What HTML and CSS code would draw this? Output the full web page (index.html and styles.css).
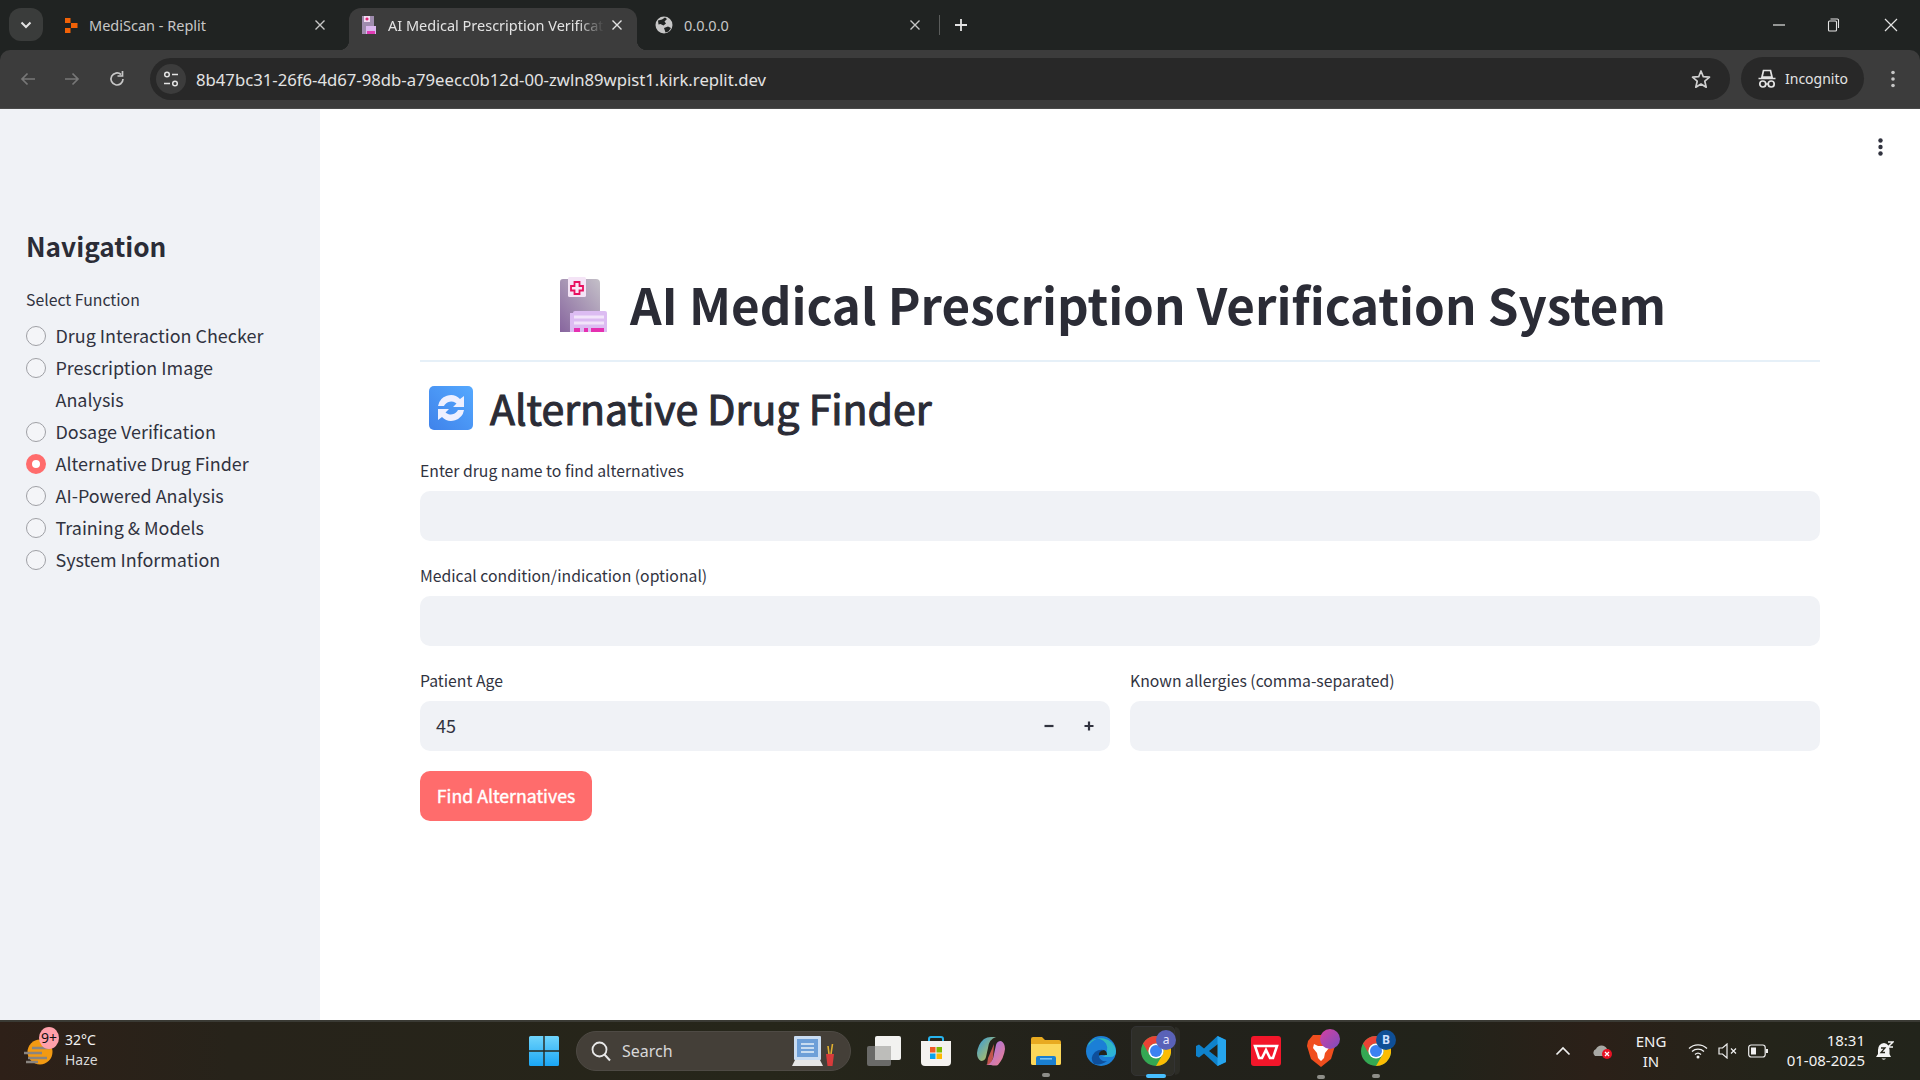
FILE: index.html
```html
<!DOCTYPE html>
<html lang="en">
<head>
<meta charset="utf-8">
<title>AI Medical Prescription Verification System</title>
<link rel="stylesheet" href="styles.css">
</head>
<body>
<svg class="defs" width="0" height="0" aria-hidden="true">
  <defs>
    <symbol id="chrome" viewBox="0 0 30 30">
      <circle cx="15" cy="15" r="15" fill="#34a853"/>
      <path d="M15 0A15 15 0 0 1 28 7.5H15A7.5 7.5 0 0 0 8.5 18.75L2 7.5A15 15 0 0 1 15 0Z" fill="#ea4335"/>
      <path d="M28 7.5A15 15 0 0 1 15 30L21.5 18.75A7.5 7.5 0 0 0 15 7.5Z" fill="#fbbc04"/>
      <circle cx="15" cy="15" r="7.6" fill="#fff"/>
      <circle cx="15" cy="15" r="6" fill="#3b82f0"/>
    </symbol>
    <symbol id="close" viewBox="0 0 12 12">
      <path d="M1.5 1.5L10.5 10.5M10.5 1.5L1.5 10.5" fill="none" stroke="currentColor" stroke-width="1.4"/>
    </symbol>
  </defs>
</svg>

<header class="tabstrip">
  <button class="tab-search" aria-label="Search tabs">
    <svg width="12" height="8" viewBox="0 0 12 8"><path d="M1.5 1.5L6 6L10.5 1.5" fill="none" stroke="#e3e3e3" stroke-width="2"/></svg>
  </button>
  <div class="tab tab-first">
    <svg class="favicon" width="14" height="15" viewBox="0 0 14 15"><path d="M1 0H6.5V5H1ZM7 5H13.5V10H7ZM1 10H6.5V15H1Z" fill="#f26207"/></svg>
    <span class="tab-title">MediScan - Replit</span>
    <svg class="tab-close" width="12" height="12"><use href="#close"/></svg>
  </div>
  <div class="tab tab-active">
    <svg class="favicon" width="16" height="18" viewBox="0 0 16 18"><rect x="1" y="0" width="12" height="18" fill="#9f8cae"/><rect x="3" y="0" width="6" height="6" fill="#f3dcf3"/><path d="M6 1.5V4.500M4.500 3H7.500" stroke="#e0186c" stroke-width="1.300"/><rect x="5" y="10" width="10" height="8" fill="#dcb8f0"/><rect x="6" y="15" width="8" height="3" fill="#e03cb4"/></svg>
    <span class="tab-title tab-title-fade">AI Medical Prescription Verificat</span>
    <svg class="tab-close" width="12" height="12"><use href="#close"/></svg>
  </div>
  <div class="tab tab-third">
    <svg class="favicon" width="18" height="18" viewBox="0 0 18 18"><circle cx="9" cy="9" r="8.500" fill="#c7c7c7"/><path d="M3 4.500L7 3.500L10 1.500L12 3L9.500 5.500L11 7.500L8.500 9.500L5.500 8L3.500 8.500ZM9 12L13 10.500L16 12L13.500 15.500L10.500 16.500Z" fill="#202322"/></svg>
    <span class="tab-title">0.0.0.0</span>
    <svg class="tab-close" width="12" height="12"><use href="#close"/></svg>
  </div>
  <span class="tab-sep"></span>
  <svg class="new-tab" width="14" height="14" viewBox="0 0 14 14"><path d="M7 1V13M1 7H13" stroke="#e3e3e3" stroke-width="1.800"/></svg>
  <div class="window-controls">
    <svg width="14" height="14" viewBox="0 0 14 14"><path d="M1 7H13" stroke="#e3e3e3" stroke-width="1.200"/></svg>
    <svg class="win-restore" width="14" height="14" viewBox="0 0 14 14"><rect x="2.500" y="3" width="8" height="10" rx="1" fill="none" stroke="#e3e3e3" stroke-width="1.100"/><path d="M4.500 1H11.500Q12.500 1 12.500 2V10" fill="none" stroke="#e3e3e3" stroke-width="1.100"/></svg>
    <svg width="14" height="14" viewBox="0 0 14 14"><path d="M1 1L13 13M13 1L1 13" stroke="#e3e3e3" stroke-width="1.200"/></svg>
  </div>
</header>

<nav class="toolbar">
  <div class="nav-buttons">
    <svg width="18" height="18" viewBox="0 0 18 18"><path d="M16 9H3M8.500 3.500L3 9L8.500 14.500" fill="none" stroke="#777" stroke-width="1.700"/></svg>
    <svg width="18" height="18" viewBox="0 0 18 18"><path d="M2 9H15M9.500 3.500L15 9L9.500 14.500" fill="none" stroke="#777" stroke-width="1.700"/></svg>
    <svg class="reload" width="18" height="18" viewBox="0 0 18 18"><path d="M15 9A6 6 0 1 1 13 4.500" fill="none" stroke="#c7c7c7" stroke-width="1.700"/><path d="M14.500 1V6H9.500" fill="none" stroke="#c7c7c7" stroke-width="1.700"/></svg>
  </div>
  <div class="omnibox">
    <span class="site-info">
      <svg width="18" height="18" viewBox="0 0 18 18"><circle cx="5" cy="4.500" r="2.300" fill="none" stroke="#e3e3e3" stroke-width="1.500"/><path d="M10 4.500H16M2 13.500H8" stroke="#e3e3e3" stroke-width="1.500"/><circle cx="13" cy="13.500" r="2.300" fill="none" stroke="#e3e3e3" stroke-width="1.500"/></svg>
    </span>
    <span class="url">8b47bc31-26f6-4d67-98db-a79eecc0b12d-00-zwln89wpist1.kirk.replit.dev</span>
    <svg class="star" width="20" height="20" viewBox="0 0 20 20"><path d="M10 2L12.300 7.700L18.500 8.200L13.800 12.200L15.200 18.200L10 15L4.800 18.200L6.200 12.200L1.500 8.200L7.700 7.700Z" fill="none" stroke="#d0d0d0" stroke-width="1.700" stroke-linejoin="round"/></svg>
  </div>
  <div class="incognito">
    <svg width="20" height="20" viewBox="0 0 20 20"><path d="M5 8L6.500 1.500H13.500L15 8ZM1.500 9.500H18.500" fill="none" stroke="#e3e3e3" stroke-width="1.700"/><circle cx="5.800" cy="15" r="3" fill="none" stroke="#e3e3e3" stroke-width="1.700"/><circle cx="14.200" cy="15" r="3" fill="none" stroke="#e3e3e3" stroke-width="1.700"/><path d="M8.800 15H11.200" stroke="#e3e3e3" stroke-width="1.500"/></svg>
    <span>Incognito</span>
  </div>
  <svg class="chrome-menu" width="4" height="18" viewBox="0 0 4 18"><circle cx="2" cy="2.500" r="1.800" fill="#c7c7c7"/><circle cx="2" cy="9" r="1.800" fill="#c7c7c7"/><circle cx="2" cy="15.500" r="1.800" fill="#c7c7c7"/></svg>
</nav>

<div class="page">
  <aside class="sidebar">
    <h2 class="side-title">Navigation</h2>
    <div class="side-label">Select Function</div>
    <ul class="radio-list">
      <li class="radio"><span class="dot"></span><span>Drug Interaction Checker</span></li>
      <li class="radio"><span class="dot"></span><span>Prescription Image<br>Analysis</span></li>
      <li class="radio"><span class="dot"></span><span>Dosage Verification</span></li>
      <li class="radio radio-on"><span class="dot"></span><span>Alternative Drug Finder</span></li>
      <li class="radio"><span class="dot"></span><span>AI-Powered Analysis</span></li>
      <li class="radio"><span class="dot"></span><span>Training &amp; Models</span></li>
      <li class="radio"><span class="dot"></span><span>System Information</span></li>
    </ul>
  </aside>
  <main class="main">
    <svg class="kebab" width="5" height="18" viewBox="0 0 5 18"><circle cx="2.500" cy="2.500" r="2.200" fill="#31333f"/><circle cx="2.500" cy="9" r="2.200" fill="#31333f"/><circle cx="2.500" cy="15.500" r="2.200" fill="#31333f"/></svg>
    <div class="title-row">
      <svg class="title-icon" width="48" height="55" viewBox="0 0 48 55">
        <defs><linearGradient id="sheet" x1="0" y1="1" x2="1" y2="0"><stop offset="0" stop-color="#87659e"/><stop offset="1" stop-color="#c4c0c8"/></linearGradient></defs>
        <path d="M3 2H36Q40 2 40 6V55H0V5Q0 2 3 2Z" fill="url(#sheet)"/>
        <rect x="8" y="0" width="18" height="20" rx="1.500" fill="#f4e4f6"/>
        <path d="M14.500 5H19.500V9H23V13.500H19.500V17H14.500V13.500H11V9H14.500Z" fill="#f8e8f6" stroke="#e8105e" stroke-width="1.800"/>
        <path d="M13 36Q13 34 15 34H45Q47 34 47 36V55H10V36Z" fill="#dcbcf2"/>
        <path d="M14 40H44M14 46H44" stroke="#f2e4fa" stroke-width="3"/>
        <rect x="14" y="51" width="6" height="4" fill="#e530b0"/><rect x="24" y="51" width="4" height="4" fill="#e530b0"/><rect x="31" y="51" width="13" height="4" fill="#e530b0"/>
      </svg>
      <h1 class="title">AI Medical Prescription Verification System</h1>
    </div>
    <hr class="rule">
    <div class="sub-row">
      <svg class="sub-icon" width="44" height="44" viewBox="0 0 44 44">
        <defs><linearGradient id="blue" x1="0" y1="1" x2="1" y2="0"><stop offset="0" stop-color="#3f82ea"/><stop offset="1" stop-color="#55a9ff"/></linearGradient></defs>
        <rect width="44" height="44" rx="5" fill="url(#blue)"/>
        <path d="M9 20A13 13 0 0 1 31 13L35 10V21H24L27.500 17.500A8 8 0 0 0 15 20Z" fill="#eef0ff"/>
        <path d="M35 24A13 13 0 0 1 13 31L9 34V23H20L16.500 26.500A8 8 0 0 0 29 24Z" fill="#eef0ff"/>
      </svg>
      <h2 class="sub-title">Alternative Drug Finder</h2>
    </div>
    <div class="field">
      <label class="field-label">Enter drug name to find alternatives</label>
      <div class="input"></div>
    </div>
    <div class="field">
      <label class="field-label">Medical condition/indication (optional)</label>
      <div class="input"></div>
    </div>
    <div class="columns">
      <div class="field">
        <label class="field-label">Patient Age</label>
        <div class="input input-number">
          <span class="value">45</span>
          <svg class="step step-minus" width="12" height="12" viewBox="0 0 12 12"><path d="M1.500 6H10.500" stroke="#31333f" stroke-width="2.200"/></svg>
          <svg class="step" width="12" height="12" viewBox="0 0 12 12"><path d="M1.500 6H10.500M6 1.500V10.500" stroke="#31333f" stroke-width="2.200"/></svg>
        </div>
      </div>
      <div class="field">
        <label class="field-label">Known allergies (comma-separated)</label>
        <div class="input"></div>
      </div>
    </div>
    <button class="primary">Find Alternatives</button>
  </main>
</div>

<footer class="taskbar">
  <div class="weather">
    <svg class="weather-icon" width="30" height="28" viewBox="0 0 30 28"><circle cx="16" cy="15" r="12.500" fill="#f39a12"/><path d="M0 16H18M4 21H23M8 11H26M2 25H14" stroke="#8a8580" stroke-width="2.600"/></svg>
    <span class="weather-badge">9+</span>
    <div class="weather-text"><span>32°C</span><span class="haze">Haze</span></div>
  </div>
  <div class="task-center">
    <svg class="win" width="30" height="30" viewBox="0 0 30 30"><defs><linearGradient id="win" x1="0" y1="0" x2="0" y2="1"><stop offset="0" stop-color="#6fd4fb"/><stop offset="1" stop-color="#1aa6f5"/></linearGradient></defs><path d="M0 1.500Q0 0 1.500 0H14.300V14.300H0ZM15.700 0H28.500Q30 0 30 1.500V14.300H15.700ZM0 15.700H14.300V30H1.500Q0 30 0 28.500ZM15.700 15.700H30V28.500Q30 30 28.500 30H15.700Z" fill="url(#win)"/></svg>
    <div class="search">
      <svg width="22" height="22" viewBox="0 0 22 22"><circle cx="9.500" cy="9.500" r="7" fill="none" stroke="#e8e8e8" stroke-width="1.800"/><path d="M14.500 14.500L20 20.500" stroke="#e8e8e8" stroke-width="2"/></svg>
      <span class="search-text">Search</span>
      <svg class="search-art" width="44" height="34" viewBox="0 0 44 34"><rect x="2" y="2" width="27" height="24" rx="1" fill="#c9dcf2"/><rect x="5" y="5" width="21" height="18" fill="#6d9fd8"/><path d="M9 10H22M9 14H22M9 18H22" stroke="#c8dcf0" stroke-width="2"/><path d="M0 32L3 26H28L31 32Z" fill="#e6e6e6"/><path d="M34 20H42L40.500 32H35.500Z" fill="#d83b3b"/><path d="M37 20L36 12M39 20L40.500 10" stroke="#e0b030" stroke-width="1.600"/></svg>
    </div>
    <svg class="app app-task" width="34" height="30" viewBox="0 0 34 30"><rect x="0" y="10" width="24" height="20" rx="2" fill="#6a6a68"/><rect x="8" y="0" width="26" height="24" rx="2" fill="#f2f2f0"/><rect x="8" y="10" width="16" height="14" fill="#bdbdba"/></svg>
    <svg class="app app-store" width="30" height="30" viewBox="0 0 30 30"><path d="M8 6V3Q8 1 10 1H20Q22 1 22 3V6" fill="none" stroke="#27b4ee" stroke-width="2"/><path d="M0 5H30V26Q30 30 26 30H4Q0 30 0 26Z" fill="#f4f2ef"/><rect x="9" y="11" width="5.500" height="5.500" fill="#ef5a25"/><rect x="15.500" y="11" width="5.500" height="5.500" fill="#7fba00"/><rect x="9" y="17.500" width="5.500" height="5.500" fill="#0aa3ea"/><rect x="15.500" y="17.500" width="5.500" height="5.500" fill="#fdb900"/></svg>
    <svg class="app app-copilot" width="30" height="30" viewBox="0 0 30 30"><defs><linearGradient id="cp1" x1="0" y1="0" x2="1" y2="1"><stop offset="0" stop-color="#2f9ae0"/><stop offset="1" stop-color="#d8c840"/></linearGradient><linearGradient id="cp2" x1="0" y1="0" x2="1" y2="1"><stop offset="0" stop-color="#9a70f0"/><stop offset="1" stop-color="#f0808a"/></linearGradient></defs><path d="M8 3Q11 1 15 1H20Q13 3 12 12L10 21Q9 25 5 25Q1 23 1 17Q2 8 8 3Z" fill="url(#cp1)"/><path d="M22 29Q19 30 15 29H10Q17 27 18 18L20 9Q21 5 25 5Q29 7 29 13Q28 22 22 29Z" fill="url(#cp2)"/><path d="M12 22L18 8L17 22Q15 28 11 29Z" fill="#e8605a" opacity=".8"/></svg>
    <div class="app-wrap app-files">
      <svg class="app" width="30" height="28" viewBox="0 0 30 28"><path d="M0 2Q0 0 2 0H11L14 3H28Q30 3 30 5V26Q30 28 28 28H2Q0 28 0 26Z" fill="#e8aa20"/><path d="M0 7H30V26Q30 28 28 28H2Q0 28 0 26Z" fill="#fbd75a"/><path d="M5 28V21Q5 19 7 19H23Q25 19 25 21V28Z" fill="#1a7fd0"/><rect x="9" y="21" width="12" height="1.600" fill="#7cc4f4"/></svg>
      <span class="pip"></span>
    </div>
    <svg class="app app-edge" width="30" height="30" viewBox="0 0 30 30"><defs><linearGradient id="ed1" x1="0" y1="0" x2="1" y2="1"><stop offset="0" stop-color="#35c1a0"/><stop offset="1" stop-color="#2bb0e0"/></linearGradient></defs><circle cx="15" cy="15" r="15" fill="#1b7fd6"/><path d="M2 10A15 15 0 0 1 30 15Q30 21 24 21H16Q21 20 21 15A9 9 0 0 0 2 10Z" fill="url(#ed1)"/><path d="M21 25A15 15 0 0 1 8 28Q3 22 9 16Q13 13 18 14Q12 16 13 21Q15 26 21 25Z" fill="#0e4f9c"/><path d="M13 20Q12 15 18 14Q21 15 21 19H15Q13 19 13 20Z" fill="#22241c"/></svg>
    <div class="app-wrap app-active">
      <span class="active-box"><span class="active-edge"></span></span>
      <svg class="app" width="30" height="30"><use href="#chrome"/></svg>
      <span class="profile profile-a">a</span>
      <span class="pip pip-blue"></span>
    </div>
    <svg class="app app-code" width="30" height="30" viewBox="0 0 30 30"><path d="M21.500 0L30 4V26L21.500 30L8 17.500L3 21.500L0 20V10L3 8.500L8 12.500ZM22 8L13 15L22 22Z" fill="#0f82cc"/><path d="M21.500 0L30 4V26L21.500 30Z" fill="#26a5ee"/></svg>
    <svg class="app app-wps" width="30" height="30" viewBox="0 0 30 30"><rect width="30" height="30" rx="3" fill="#f3162a"/><path d="M4 10H26L22 22H19L15 14L11 22H8Z" fill="none" stroke="#fff" stroke-width="2.600"/></svg>
    <div class="app-wrap app-brave">
      <svg class="app" width="28" height="32" viewBox="0 0 28 32"><path d="M6 0H22L27 6L28 11L24 24L14 32L4 24L0 11L1 6Z" fill="#f04e1e"/><path d="M7 9L11 11H17L21 9L22 13L18 18L17 23L14 26L11 23L10 18L6 13Z" fill="#fff"/></svg>
      <span class="profile profile-b"></span>
      <span class="pip"></span>
    </div>
    <div class="app-wrap app-last">
      <svg class="app" width="30" height="30"><use href="#chrome"/></svg>
      <span class="profile profile-c">B</span>
      <span class="pip"></span>
    </div>
  </div>
  <div class="tray">
    <svg class="tray-chevron" width="16" height="10" viewBox="0 0 16 10"><path d="M1.500 8.500L8 2L14.500 8.500" fill="none" stroke="#f0f0f0" stroke-width="1.700"/></svg>
    <svg class="tray-cloud" width="21" height="16" viewBox="0 0 21 16"><path d="M3 13A4 4 0 0 1 4 6A6 6 0 0 1 15 6A4 4 0 0 1 17 13Z" fill="#a8a8a4"/><circle cx="15" cy="11" r="5" fill="#e81224"/><path d="M13 9L17 13M17 9L13 13" stroke="#fff" stroke-width="1.300"/></svg>
    <div class="lang"><span>ENG</span><span>IN</span></div>
    <svg class="tray-wifi" width="20" height="16" viewBox="0 0 20 16"><path d="M1 5.500A13 13 0 0 1 19 5.500M4 8.500A9 9 0 0 1 16 8.500M7 11.500A4.500 4.500 0 0 1 13 11.500" fill="none" stroke="#f0f0f0" stroke-width="1.300"/><circle cx="10" cy="14" r="1.500" fill="#f0f0f0"/></svg>
    <svg class="tray-sound" width="20" height="16" viewBox="0 0 20 16"><path d="M1 5H4.500L9 1V15L4.500 11H1Z" fill="none" stroke="#f0f0f0" stroke-width="1.200"/><path d="M13 5.500L18 10.500M18 5.500L13 10.500" stroke="#f0f0f0" stroke-width="1.200"/></svg>
    <svg class="tray-battery" width="20" height="14" viewBox="0 0 20 14"><rect x=".7" y="1" width="16.500" height="12" rx="2.500" fill="none" stroke="#f0f0f0" stroke-width="1.200"/><rect x="3" y="3.500" width="5" height="7" fill="#f0f0f0"/><rect x="18" y="5" width="2" height="4" fill="#f0f0f0"/></svg>
    <div class="clock"><span>18:31</span><span>01-08-2025</span></div>
    <svg class="bell" width="18" height="20" viewBox="0 0 18 20"><path d="M8 2Q2 3 2 9V13L0 16H15L13.500 13V9Q13.500 3 8 2Z" fill="#f4f4f4"/><path d="M5.500 17.500A2.500 2 0 0 0 10 17.500Z" fill="#f4f4f4"/><path d="M5 7H9L5 11.500H9" fill="none" stroke="#26261c" stroke-width="1.300"/><path d="M12 1H17L12 6H17" fill="none" stroke="#f4f4f4" stroke-width="1.500"/></svg>
  </div>
</footer>
</body>
</html>
```
FILE: styles.css
```css
* { box-sizing: border-box; }
html, body { margin: 0; height: 100%; }
body {
  display: flex;
  flex-direction: column;
  height: 1080px;
  overflow: hidden;
  background: #202322;
  font-family: "Noto Sans", "Liberation Sans", sans-serif;
}
.defs { position: absolute; }

/* tab strip */
.tabstrip { height: 50px; display: flex; align-items: flex-end; flex: none; }
.tab-search {
  width: 34px; height: 33px; margin: 0 0 9px 9px; border: 0; border-radius: 12px;
  background: #3a3c3b; display: flex; align-items: center; justify-content: center; padding: 0;
}
.tab {
  height: 42px; display: flex; align-items: center; color: #c7c7c7; font-size: 14.500px;
  position: relative; flex: none; padding-bottom: 8px;
}
.tab-first { width: 306px; padding-left: 21px; padding-right: 23px; }
.tab-active {
  width: 288px; padding-left: 12px; padding-right: 14px; background: #3c3c3c;
  border-radius: 12px 12px 0 0; color: #e3e3e3;
}
.tab-active::before, .tab-active::after {
  content: ""; position: absolute; bottom: 0; width: 10px; height: 10px;
}
.tab-active::before { left: -10px; background: radial-gradient(circle at 0 0, transparent 10px, #3c3c3c 10.5px); }
.tab-active::after { right: -10px; background: radial-gradient(circle at 100% 0, transparent 10px, #3c3c3c 10.5px); }
.tab-third { width: 296px; padding-left: 18px; padding-right: 12px; }
.favicon { flex: none; margin-right: 11px; }
.tab-title { white-space: nowrap; }
.tab-title-fade { mask-image: linear-gradient(90deg, #000 88%, transparent 100%); }
.tab-close { flex: none; margin-left: auto; }
.tab-sep { width: 1px; height: 20px; background: #5a5c5b; margin: 0 0 15px 6px; }
.new-tab { margin: 0 0 18px 14px; }
.window-controls {
  margin-left: auto; padding-right: 22px; margin-bottom: 18px;
  display: flex;
}
.win-restore { margin: 0 44px 0 40px; }

/* toolbar */
.toolbar {
  height: 59px; flex: none; background: #3c3c3c; border-radius: 10px 10px 0 0;
  display: flex; align-items: center; border-bottom: 1px solid #4a4a4a;
}
.nav-buttons { display: flex; gap: 26px; padding-left: 19px; width: 150px; flex: none; }
.reload { margin-left: 1px; }
.omnibox {
  width: 1580px; height: 42px; border-radius: 21px; background: #282828; flex: none;
  display: flex; align-items: center; padding-left: 6px; padding-right: 19px;
  margin-top: -1px;
}
.site-info {
  width: 30px; height: 30px; border-radius: 50%; background: #3c3c3c;
  display: flex; align-items: center; justify-content: center; flex: none;
}
.url { color: #e3e3e3; font-size: 16.700px; margin-left: 10px; flex: 1; white-space: nowrap; padding-top: 1px; }
.incognito {
  width: 123px; height: 43px; margin-left: 11px; border-radius: 22px; background: #282828;
  display: flex; align-items: center; gap: 8px; padding-left: 16px; color: #e3e3e3; font-size: 14px; flex: none;
  margin-top: -1px;
}
.chrome-menu { margin-left: 27px; flex: none; }

/* page */
.page { flex: 1; display: flex; background: #fff; min-height: 0; color: #31333f; font-family: "Noto Sans CJK JP", "Noto Sans", sans-serif; }
.sidebar { width: 320px; flex: none; background: #f0f2f6; padding: 118px 26px 0 26px; }
.side-title { margin: 0; font-size: 26.200px; line-height: 38px; font-weight: 700; color: #2b2c36; }
.side-label { margin-top: 24px; font-size: 15.800px; line-height: 22px; }
.radio-list { list-style: none; margin: 8px 0 0; padding: 0; }
.radio { display: flex; align-items: flex-start; font-size: 17.950px; line-height: 32px; }
.dot {
  width: 20px; height: 20px; border-radius: 50%; background: #f4f5f8; border: 1.500px solid #9fa0a5;
  margin: 7px 9.500px 0 0; flex: none;
}
.radio-on .dot { background: #fff; border: 6px solid #ff6c6c; }
.main { flex: 1; padding: 0 100px; min-width: 0; position: relative; }
.kebab { position: absolute; right: 37px; top: 29px; }
.title-row { display: flex; align-items: center; gap: 22px; margin-top: 159px; height: 72px; padding-left: 140px; }
.title-icon { flex: none; }
.title { margin: 0; font-size: 49.300px; line-height: 72px; font-weight: 700; color: #2b2c36; white-space: nowrap; }
.rule { margin: 20px 0 0; height: 2px; border: 0; background: #e6f0f8; }
.sub-row { display: flex; align-items: center; gap: 17px; padding-left: 9px; margin-top: 24px; height: 44px; }
.sub-icon { flex: none; }
.sub-title { margin: -2px 0 0; font-size: 41px; line-height: 48px; font-weight: 400; color: #2b2c36; -webkit-text-stroke: 1.100px #2b2c36; }
.field { display: flex; flex-direction: column; }
.field-label { font-size: 15.750px; line-height: 26px; height: 33px; margin-top: 22px; }
.sub-row + .field .field-label { margin-top: 28px; }
.input { height: 50px; border-radius: 10px; background: #f0f2f6; }
.columns { display: grid; grid-template-columns: 1fr 1fr; gap: 20px; }
.input-number { display: flex; align-items: center; padding: 0 15px 0 16px; font-size: 18px; }
.value { flex: 1; padding-bottom: 2px; }
.step-minus { margin-right: 28px; }
.primary {
  display: block; margin-top: 20px; height: 50px; width: 172px; border: 0; border-radius: 10px;
  background: #ff6c6c; color: #fff; font: 400 17.700px "Noto Sans CJK JP", "Noto Sans", sans-serif; padding: 0 0 3px;
  -webkit-text-stroke: .4px #fff;
}

/* taskbar */
.taskbar {
  height: 60px; flex: none; position: relative; display: flex; align-items: center;
  background: linear-gradient(90deg, #2e2018 0%, #27231a 12%, #26261a 40%, #22211b 60%, #22231a 75%, #2b2018 83%, #24241a 92%, #22241b 100%);
  border-top: 2px solid #3a3a34; color: #f2f2f2; font-family: "Noto Sans", sans-serif;
}
.weather { width: 523px; flex: none; display: flex; align-items: center; padding-left: 24px; position: relative; }
.weather-icon { flex: none; }
.weather-badge {
  position: absolute; left: 39px; top: -5px; width: 20px; height: 22px; border-radius: 50%;
  background: #ffa0aa; color: #111; font-size: 14px; line-height: 22px; text-align: center;
}
.weather-text { display: flex; flex-direction: column; margin: -2px 0 0 11px; font-size: 14px; line-height: 20px; }
.haze { color: #d8d8d8; }
.task-center { display: flex; align-items: center; flex: none; padding-left: 6px; }
.search {
  width: 275px; height: 40px; border-radius: 20px; background: #443f38; margin-left: 17px; flex: none;
  display: flex; align-items: center; padding-left: 13px; border: 1px solid #4e4a44;
}
.search-text { margin-left: 10px; font-size: 16px; color: #d8d8d8; flex: 1; }
.search-art { margin-right: 14px; }
.app { flex: none; display: block; position: relative; }
.app-task { margin-left: 16px; }
.app-store { margin-left: 20px; }
.app-copilot { margin-left: 25px; }
.app-wrap { position: relative; flex: none; }
.app-files { margin-left: 25px; }
.app-edge { margin-left: 25px; }
.app-active { margin-left: 25px; }
.app-code { margin-left: 25px; }
.app-wps { margin-left: 25px; }
.app-brave { margin-left: 26px; }
.app-last { margin-left: 26px; }
.pip {
  position: absolute; left: 50%; bottom: -12px; width: 8px; height: 4px; margin-left: -4px;
  border-radius: 2px; background: #8e8e88;
}
.pip-blue { width: 20px; margin-left: -10px; background: #47bfff; }
.active-box {
  position: absolute; left: -10px; top: -10px; width: 44px; height: 50px; border-radius: 5px;
  background: #2e2e28; border: 1px solid #333;
}
.active-edge { position: absolute; right: -6px; top: 0; width: 5px; height: 48px; border-radius: 0 5px 5px 0; background: #2c2c26; }
.profile {
  position: absolute; width: 20px; height: 20px; border-radius: 50%;
  font-size: 12px; line-height: 20px; text-align: center; right: -5px; top: -6px; color: #e8e8ff;
}
.profile-a { background: #5a62b8; }
.profile-b { background: linear-gradient(135deg, #d640a0, #7a4ec0); }
.profile-c { background: #0f4f96; color: #cfe0ff; font-weight: 700; }
.tray { position: absolute; left: 1555px; top: 0; bottom: 0; display: flex; align-items: center; }
.tray > svg { flex: none; }
.tray-cloud { margin-left: 21px; }
.lang { display: flex; flex-direction: column; align-items: center; font-size: 15px; line-height: 20px; width: 40px; margin: -1px 0 0 18px; }
.tray-wifi { margin-left: 17px; }
.tray-sound { margin-left: 10px; }
.tray-battery { margin-left: 10px; }
.clock { display: flex; flex-direction: column; align-items: flex-end; font-size: 15px; line-height: 20px; margin: -3px 0 0 13px; width: 84px; }
.bell { margin-left: 11px; }
```
